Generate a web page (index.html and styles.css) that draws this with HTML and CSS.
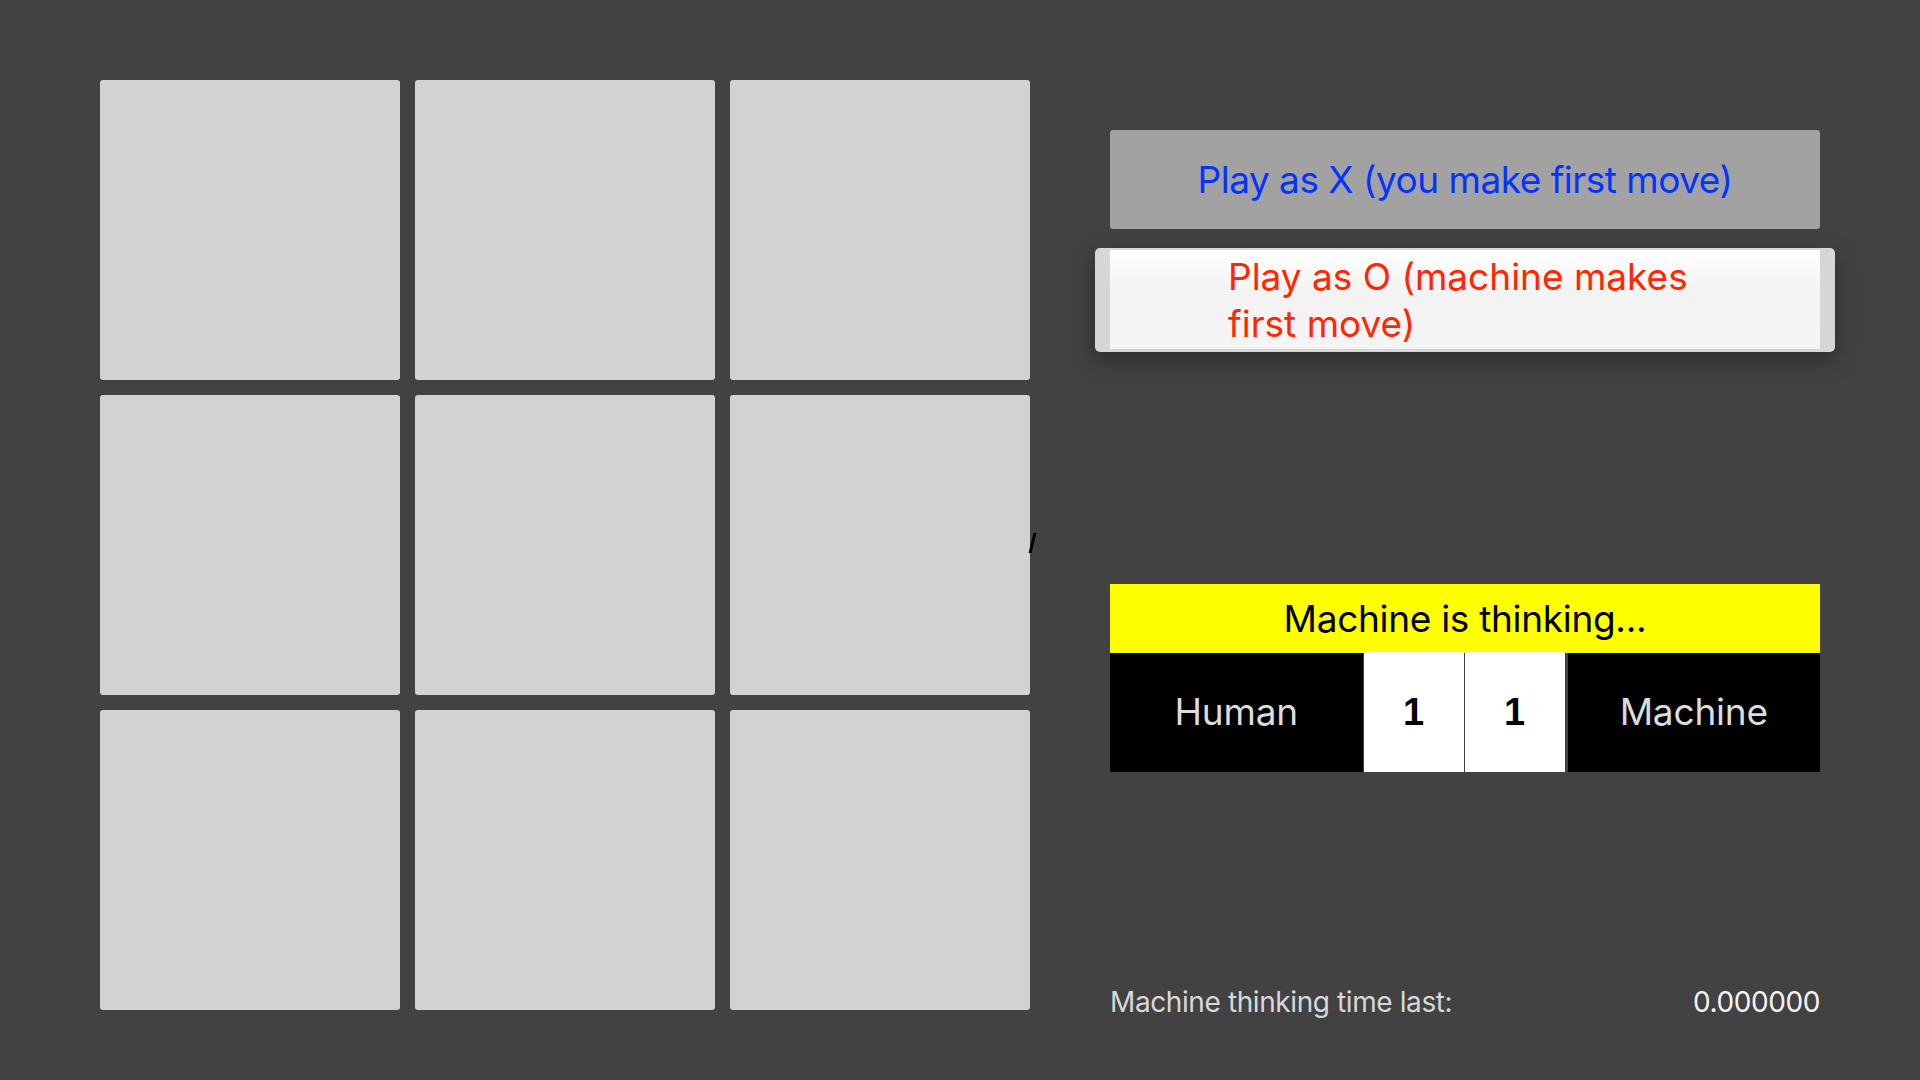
FILE: index.html
```html
<!DOCTYPE html>
<html lang="en">
<head>
    <meta charset="UTF-8">
    <meta name="viewport" content="width=device-width, initial-scale=1.0">
    <title>Tic Tac Toe</title>
    <link rel="stylesheet" href="styles.css">
</head>
<body>
    <div class="page">
        <div class="board-wrap">
            <div class="board">
                <div class="cell"></div>
                <div class="cell"></div>
                <div class="cell"></div>
                <div class="cell"></div>
                <div class="cell"></div>
                <div class="cell"></div>
                <div class="cell"></div>
                <div class="cell"></div>
                <div class="cell"></div>
            </div>
            <span class="tick"></span>
        </div>

        <div class="side">
            <button class="btn btn-x">Play as X (you make first move)</button>
            <button class="btn btn-o"><span>Play as O (machine makes first move)</span></button>

            <div class="score">
                <div class="status">Machine is thinking...</div>
                <div class="score-row">
                    <div class="player">Human</div>
                    <div class="points">1</div>
                    <div class="points">1</div>
                    <div class="player">Machine</div>
                </div>
            </div>

            <div class="timing">
                <span class="timing-label">Machine thinking time last:</span>
                <span class="timing-value">0.000000</span>
            </div>
        </div>
    </div>
</body>
</html>
```

FILE: styles.css
```css
body {
    margin: 0;
    background: #424242;
    font-family: Inter, "Noto Sans", sans-serif;
    width: 1920px;
    height: 1080px;
    overflow: hidden;
}
.page {
    display: flex;
    gap: 80px;
    padding: 80px 0 0 100px;
}
.board-wrap {
    position: relative;
}
.board {
    display: grid;
    grid-template-columns: repeat(3, 300px);
    grid-auto-rows: 300px;
    gap: 15px;
}
.cell {
    background: #d2d2d2;
    border-radius: 3px;
}
.tick {
    position: absolute;
    left: 931px;
    top: 453px;
    width: 3px;
    height: 20px;
    background: #000;
    transform: skewX(-14deg);
}
.side {
    width: 710px;
    display: flex;
    flex-direction: column;
    padding-top: 50px;
}
.btn {
    border: none;
    font-family: inherit;
    font-size: 37px;
    padding: 0;
    cursor: pointer;
}
.btn-x {
    height: 99px;
    background: #a2a2a2;
    color: #0433ff;
    border-radius: 3px;
    letter-spacing: -0.5px;
}
.btn-o {
    margin: 19px -15px 0;
    height: 104px;
    border-style: solid;
    border-color: #d6d6d6;
    border-width: 2px 15px 3px;
    border-radius: 5px;
    background: linear-gradient(#ffffff, #f3f3f3 40%, #f4f4f4);
    color: #ff2600;
    text-align: left;
    padding-left: 118px;
    box-shadow: 0 8px 22px rgba(0,0,0,0.35);
}
.btn-o span {
    display: block;
    width: 480px;
    line-height: 47px;
}
.score {
    margin-top: 232px;
}
.status {
    height: 69px;
    background: #ffff00;
    color: #000;
    font-size: 37px;
    letter-spacing: -0.3px;
    display: flex;
    align-items: center;
    justify-content: center;
}
.score-row {
    display: flex;
    height: 119px;
}
.player {
    flex: 1;
    background: #000;
    color: #dcdcdc;
    font-size: 37px;
    letter-spacing: -0.2px;
    display: flex;
    align-items: center;
    justify-content: center;
    padding-bottom: 2px;
}
.points {
    width: 100px;
    margin: -1px 0 0 1px;
    background: #fff;
    color: #000;
    font-family: "Liberation Sans", Arial, sans-serif;
    font-weight: bold;
    font-size: 38px;
    display: flex;
    align-items: center;
    justify-content: center;
}
.points + .points {
    margin-right: 3px;
}
.timing {
    margin-top: 213px;
    display: flex;
    justify-content: space-between;
    font-size: 28px;
    letter-spacing: -0.4px;
}
.timing-label {
    color: #d8d8d8;
}
.timing-value {
    color: #f4f4f4;
}
```
